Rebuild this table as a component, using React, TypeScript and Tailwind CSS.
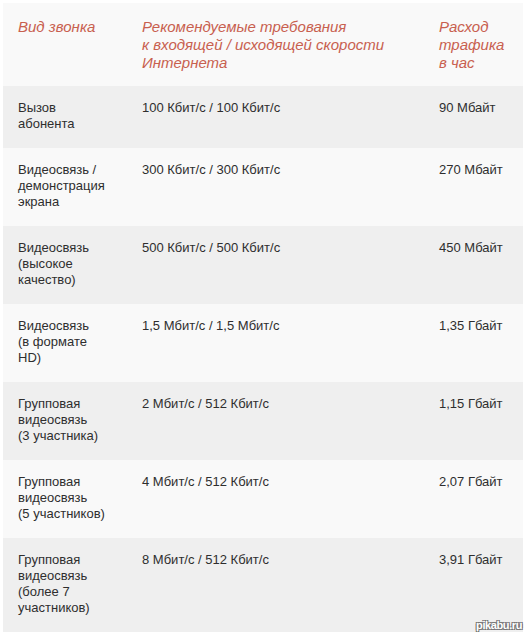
import React from "react";

const rows: [string[], string, string][] = [
  [["Вызов", "абонента"], "100 Кбит/с / 100 Кбит/с", "90 Мбайт"],
  [["Видеосвязь /", "демонстрация", "экрана"], "300 Кбит/с / 300 Кбит/с", "270 Мбайт"],
  [["Видеосвязь", "(высокое", "качество)"], "500 Кбит/с / 500 Кбит/с", "450 Мбайт"],
  [["Видеосвязь", "(в формате", "HD)"], "1,5 Мбит/с / 1,5 Мбит/с", "1,35 Гбайт"],
  [["Групповая", "видеосвязь", "(3 участника)"], "2 Мбит/с / 512 Кбит/с", "1,15 Гбайт"],
  [["Групповая", "видеосвязь", "(5 участников)"], "4 Мбит/с / 512 Кбит/с", "2,07 Гбайт"],
  [["Групповая", "видеосвязь", "(более 7", "участников)"], "8 Мбит/с / 512 Кбит/с", "3,91 Гбайт"],
];

export default function App() {
  return (
    <div className="relative w-[528px] h-[637px] bg-white p-[3px] pr-[5px] font-['Liberation_Sans',Arial,sans-serif]">
      <div className="w-[520px] bg-[#f9f9f9]">
        <div className="grid grid-cols-[124px_297px_99px] text-[15px] leading-[18px] italic text-[#c8604f] pt-[15px] pb-[14px]">
          <div className="px-[15px]">Вид звонка</div>
          <div className="px-[15px]">
            Рекомендуемые требования
            <br />к входящей / исходящей скорости
            <br />Интернета
          </div>
          <div className="px-[15px]">
            Расход
            <br />
            трафика
            <br />в час
          </div>
        </div>
        {rows.map(([name, speed, traffic], i) => (
          <div
            key={i}
            className={
              "grid grid-cols-[124px_297px_99px] text-[13px] leading-[16px] text-[#2e2e2e] pt-[14px] pb-[16px] " +
              (i % 2 === 0 ? "bg-[#efefef]" : "bg-[#f9f9f9]")
            }
          >
            <div className="px-[15px]">
              {name.map((l, j) => (
                <div key={j}>{l}</div>
              ))}
            </div>
            <div className="px-[15px]">{speed}</div>
            <div className="px-[15px]">{traffic}</div>
          </div>
        ))}
      </div>
      <div className="absolute right-[6px] bottom-[5px] text-[11px] leading-[13px] font-bold tracking-[-0.4px] text-white [text-shadow:-1px_-1px_0_#777,1px_-1px_0_#777,-1px_1px_0_#777,1px_1px_0_#777]">
        pikabu.ru
      </div>
    </div>
  );
}
